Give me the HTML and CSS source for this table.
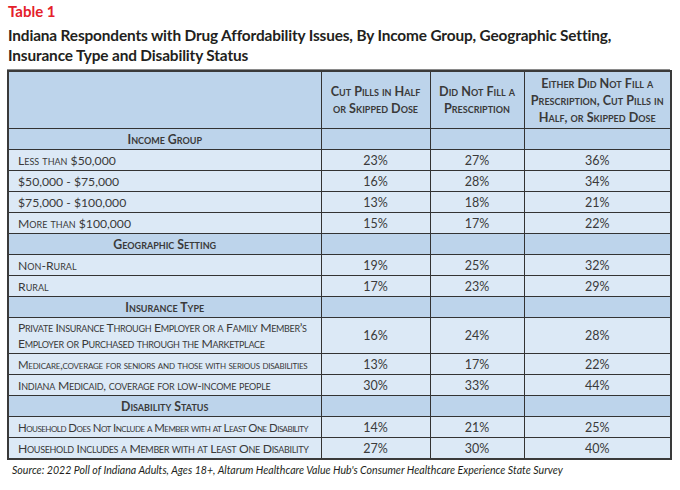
FILE: index.html
```html
<!DOCTYPE html>
<html>
<head>
<meta charset="utf-8">
<link rel="stylesheet" href="styles.css">
</head>
<body>
<div class="page">
  <div class="label">Table 1</div>
  <h1 class="title">Indiana Respondents with Drug Affordability Issues, By Income Group, Geographic Setting, Insurance Type and Disability Status</h1>
  <table class="data">
    <colgroup>
      <col class="c1"><col class="c2"><col class="c3"><col class="c4">
    </colgroup>
    <thead>
      <tr class="head">
        <th></th>
        <th>Cut Pills in Half<br>or Skipped Dose</th>
        <th>Did Not Fill a<br>Prescription</th>
        <th>Either Did Not Fill a<br>Prescription, Cut Pills in<br>Half, or Skipped Dose</th>
      </tr>
    </thead>
    <tbody>
      <tr class="sec"><th>Income Group</th><td></td><td></td><td></td></tr>
      <tr><td class="lbl">Less than $50,000</td><td>23%</td><td>27%</td><td>36%</td></tr>
      <tr><td class="lbl">$50,000 - $75,000</td><td>16%</td><td>28%</td><td>34%</td></tr>
      <tr><td class="lbl">$75,000 - $100,000</td><td>13%</td><td>18%</td><td>21%</td></tr>
      <tr><td class="lbl">More than $100,000</td><td>15%</td><td>17%</td><td>22%</td></tr>
      <tr class="sec"><th>Geographic Setting</th><td></td><td></td><td></td></tr>
      <tr><td class="lbl">Non-Rural</td><td>19%</td><td>25%</td><td>32%</td></tr>
      <tr><td class="lbl">Rural</td><td>17%</td><td>23%</td><td>29%</td></tr>
      <tr class="sec"><th>Insurance Type</th><td></td><td></td><td></td></tr>
      <tr class="tall"><td class="lbl condensed">Private Insurance Through Employer or a Family Member’s<br>Employer or Purchased through the Marketplace</td><td>16%</td><td>24%</td><td>28%</td></tr>
      <tr><td class="lbl long">Medicare,coverage for seniors and those with serious disabilities</td><td>13%</td><td>17%</td><td>22%</td></tr>
      <tr><td class="lbl narrow">Indiana Medicaid, coverage for low-income people</td><td>30%</td><td>33%</td><td>44%</td></tr>
      <tr class="sec"><th>Disability Status</th><td></td><td></td><td></td></tr>
      <tr><td class="lbl long tight">Household Does Not Include a Member with at Least One Disability</td><td>14%</td><td>21%</td><td>25%</td></tr>
      <tr><td class="lbl condensed">Household Includes a Member with at Least One Disability</td><td>27%</td><td>30%</td><td>40%</td></tr>
    </tbody>
  </table>
  <p class="source">Source: 2022 Poll of Indiana Adults, Ages 18+, Altarum Healthcare Value Hub's Consumer Healthcare Experience State Survey</p>
</div>
</body>
</html>
```
FILE: styles.css
```css
html, body {
  margin: 0;
  padding: 0;
  background: #ffffff;
}
.page {
  padding: 2px 10px 0 7px;
  font-family: Lato, "Open Sans", sans-serif;
  color: #231f20;
}
.label {
  font-weight: 700;
  font-size: 15px;
  color: #e4202a;
  line-height: 18px;
  padding-left: 1px;
}
.title {
  margin: 5px 0 0 0;
  font-size: 15.4px;
  font-weight: 700;
  line-height: 20px;
  padding-left: 1px;
  padding-bottom: 4px;
  border-bottom: 1px solid #8a8a8a;
  letter-spacing: -0.15px;
  color: #231f20;
}
.data {
  width: 663px;
  border-collapse: collapse;
  table-layout: fixed;
  border: 2px solid #3a3a3a;
  font-size: 12.5px;
  color: #3a3a3a;
}
.c1 { width: 313px; }
.c2 { width: 109px; }
.c3 { width: 94px; }
.c4 { width: 147px; }
.data th, .data td {
  border: 1px solid #333333;
  padding: 0;
  text-align: center;
  height: 20px;
  background: #dce9f6;
  font-weight: 400;
}
.head th {
  background: #bdd4eb;
  height: 56px;
  font-weight: 700;
  font-variant: small-caps;
  font-size: 12.6px;
  line-height: 17px;
  color: #3a3a3a;
}
.sec th, .sec td {
  background: #bdd4eb;
}
.sec th {
  font-weight: 700;
  font-variant: small-caps;
  font-size: 12.3px;
}
.data td.lbl {
  text-align: left;
  padding-left: 9px;
  font-variant: small-caps;
  font-size: 12.2px;
  white-space: nowrap;
}
.data td.narrow {
  letter-spacing: -0.24px;
}
.data td.condensed {
  letter-spacing: -0.33px;
}
.data td.long {
  font-size: 11.4px;
  letter-spacing: -0.22px;
}
.data td.long.tight {
  letter-spacing: -0.52px;
}
.tall td {
  height: 35px;
  line-height: 16px;
}
.source {
  margin: 4px 0 0 5px;
  font-size: 10.6px;
  font-style: italic;
  color: #231f20;
}
```
